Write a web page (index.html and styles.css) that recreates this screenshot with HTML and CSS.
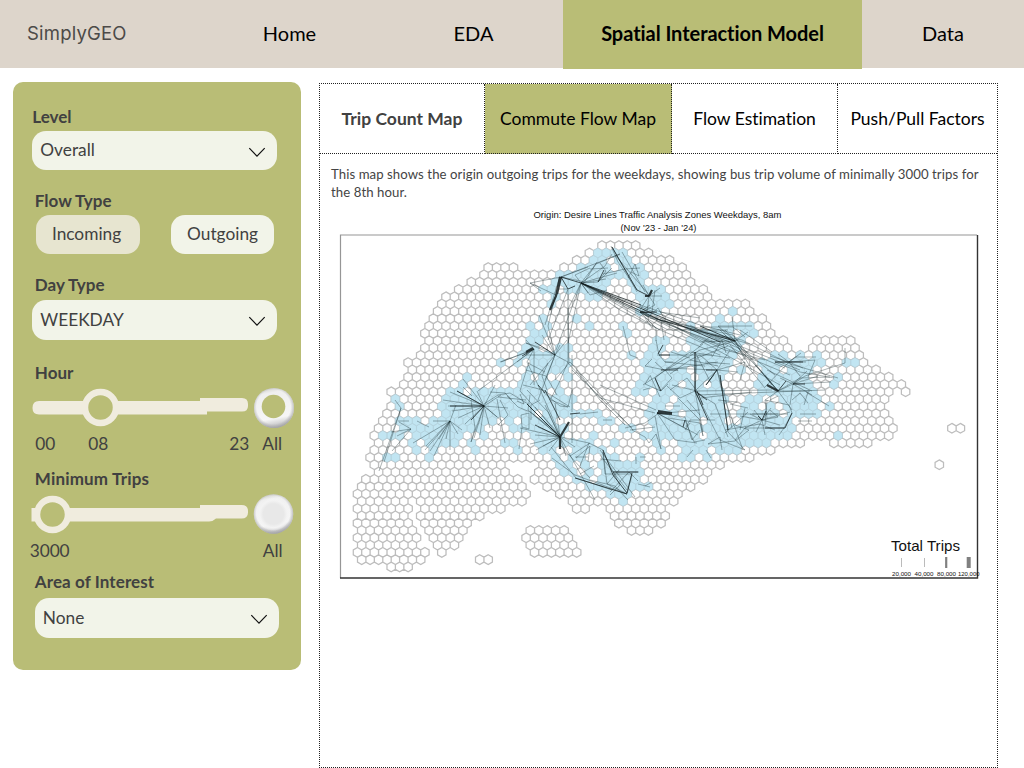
FILE: index.html
```html
<!DOCTYPE html>
<html lang="en">
<head>
<meta charset="utf-8">
<title>SimplyGEO</title>
<link rel="stylesheet" href="styles.css">
</head>
<body>
<nav class="nav">
  <span class="brand">SimplyGEO</span>
  <a class="nav-item home">Home</a>
  <a class="nav-item eda">EDA</a>
  <a class="nav-item active">Spatial Interaction Model</a>
  <a class="nav-item data">Data</a>
</nav>
<main class="page">
  <aside class="filters">
    <section class="field level">
      <h2>Level</h2>
      <div class="select"><span>Overall</span><svg width="18" height="11" viewBox="0 0 18 11"><path d="M1.3 1.2L9 9.2L16.7 1.2"/></svg></div>
    </section>
    <section class="field flow">
      <h2 class="inset">Flow Type</h2>
      <div class="buttons"><span class="btn off">Incoming</span><span class="btn">Outgoing</span></div>
    </section>
    <section class="field day">
      <h2 class="inset">Day Type</h2>
      <div class="select"><span>WEEKDAY</span><svg width="18" height="11" viewBox="0 0 18 11"><path d="M1.3 1.2L9 9.2L16.7 1.2"/></svg></div>
    </section>
    <section class="field hour">
      <h2 class="inset">Hour</h2>
      <svg class="slider" width="268" height="44" viewBox="0 0 268 44">
        <defs>
          <linearGradient id="knob" x1=".4" y1="0" x2=".6" y2="1"><stop offset="0" stop-color="#d6d6d2"/><stop offset=".12" stop-color="#efefef"/><stop offset=".75" stop-color="#f6f6f6"/><stop offset="1" stop-color="#b4b4b6"/></linearGradient>
          <radialGradient id="face"><stop offset=".6" stop-color="#e8e8e8"/><stop offset=".8" stop-color="#f3f3f3"/><stop offset="1" stop-color="#f5f5f5" stop-opacity="0"/></radialGradient>
          <radialGradient id="edge" cx=".49" cy=".47" r=".53"><stop offset=".8" stop-color="#aaa" stop-opacity="0"/><stop offset="1" stop-color="#9c9ca0" stop-opacity=".75"/></radialGradient>
        </defs>
        <path class="track" d="M7 16H168V13H210Q216 13 216 19V21Q216 26.500 210 26.500H175V29.500H7Q.5 29.500 .5 23Q.5 16 7 16Z"/>
        <circle class="thumb" cx="68.500" cy="22.500" r="15.500"/>
        <circle cx="242" cy="23" r="20" fill="url(#knob)"/>
        <circle cx="242" cy="23" r="20" fill="url(#edge)"/>
        <circle cx="241.500" cy="21.500" r="11.800" fill="#b9bd76"/>
      </svg>
      <div class="ticks"><span class="t0">00</span><span class="t8">08</span><span class="t23">23</span><span class="all">All</span></div>
    </section>
    <section class="field trips">
      <h2 class="inset">Minimum Trips</h2>
      <svg class="slider" width="268" height="44" viewBox="0 0 268 44">
        <path class="track" d="M-.5 16H168V13H209.500Q216 13 216 19V20.500Q216 26.500 209.500 26.500H184Q181 29.500 177 29.500H-.5Z"/>
        <circle class="thumb" cx="20.500" cy="22.500" r="15.500"/>
        <circle cx="241.500" cy="22" r="19.700" fill="url(#knob)"/>
        <circle cx="241.500" cy="22" r="19.700" fill="url(#edge)"/>
        <circle cx="241.500" cy="22" r="17" fill="url(#face)"/>
      </svg>
      <div class="ticks"><span class="min">3000</span><span class="all">All</span></div>
    </section>
    <section class="field area">
      <h2 class="inset">Area of Interest</h2>
      <div class="select"><span>None</span><svg width="18" height="11" viewBox="0 0 18 11"><path d="M1.3 1.2L9 9.2L16.700 1.2"/></svg></div>
    </section>
  </aside>
  <section class="content">
    <div class="tabs">
      <a class="tab first">Trip Count Map</a>
      <a class="tab current">Commute Flow Map</a>
      <a class="tab">Flow Estimation</a>
      <a class="tab last">Push/Pull Factors</a>
    </div>
    <p class="desc">This map shows the origin outgoing trips for the weekdays, showing bus trip volume of minimally 3000 trips for the 8th hour.</p>
    <svg class="map" width="650" height="375" viewBox="335 205 650 375">
      <g class="map-title"><text x="657.500" y="218" textLength="248" lengthAdjust="spacingAndGlyphs">Origin: Desire Lines Traffic Analysis Zones Weekdays, 8am</text><text x="658.500" y="231" textLength="76" lengthAdjust="spacingAndGlyphs">(Nov '23 - Jan '24)</text></g>
      <g id="cells"></g>
      <path class="thin" d="M395 400L401 408L384 462M401 408L379 471M399 422L411 429L397 436M411 429L392 451M391 432L411 429M417 421L429 427M398 421H409M413 443L450 421M426 446L450 421M430 451L450 421M434 456L450 421M439 439L450 421M450 421L446 439M450 421V450M450 421L458 434M450 421L433 421M450 421L425 450M450 421L462 430M450 421L456 405"/>
      <path class="thin" d="M450 392L484 406M443 400L484 406M448 406L484 406M452 411L484 406M458 418L484 406M465 424L484 406M471 442L484 406M474 438L484 406M484 406L480 435M484 406L490 428M484 406L497 417M484 406L502 421M484 406L508 408M484 406L501 395M484 406L477 391M484 406L463 379M484 406L457 391M484 406L495 385M463 387L472 396M471 400L475 428L471 442M497 399L500 416L505 443M500 400L508 415L498 425M490 392L505 393L512 400M484 404L498 395L510 393L528 404M498 397L526 400M507 396L518 407L530 412M520 394L524 404L517 401M521 415L529 413V429L522 427ZM522 427L519 449M540 400L531 405V420M527 390L548 412L560 437M530 412L560 437"/>
      <path class="thin" d="M478 391L534 349M501 362L534 349M500 362L528 352M517 362L534 349M534 349L527 362L538 385M534 349V385M526 340L534 349M555 355L526 343L548 350M555 355L539 315M555 355L542 335M555 355L548 326M555 355L560 345M555 355L567 340M555 355H526M555 355L568 362M555 355L545 380M555 355L530 385M555 355L538 400M570 362L555 380M568 362L558 385L550 400M538 385L560 435M523 385L543 390L570 407M529 362L520 391L560 435M530 395L528 410L560 435M543 392L560 406L568 407L551 400M548 363L542 376L547 390M545 372L528 363M526 370L546 376L557 395"/>
      <path class="thin" d="M560 437L533 414M560 437L527 404M560 437L535 407M560 437L545 405M560 437L555 403M560 437L520 428M560 437L538 427M560 437L535 435M560 437L543 446M560 437L549 451M560 437L575 447M560 437L566 456M560 437L595 500M560 437L530 444M560 437L536 450M561 437L589 443L603 450M572 413V443M572 355V412M572 390L568 407M580 414L598 412M603 420H612M551 447L576 478L612 490M552 458L575 475M575 475L627 494M576 458L590 446L588 462M570 456L590 443M575 457H588M589 443L580 466M600 450L635 497M603 452L607 484L627 494L632 474L605 474L603 450M603 452L613 472L639 472M610 492L629 472L638 481M607 484L619 470M613 472L620 485L610 495M580 474L594 466M600 459L621 461M636 457V464M640 457H646M645 486L652 482M638 484L650 487M590 480L615 486L628 500M600 455L627 490M560 445L590 478"/>
      <path class="thin" d="M561 277L530 283L541 291M561 277L620 254M561 277L588 267M581 283L605 266L612 254M581 283L596 264L620 254M581 283L598 282L612 268M598 282L606 271L600 263M581 283L590 295L607 290M581 283L588 293M581 283L606 279M581 283L617 273M581 283L575 275L590 268M581 283L568 309L569 363M568 290V363M581 283L568 343M581 283L556 350M568 289L548 340M560 276L545 325M555 297L548 326M568 289H558M561 277L585 282M530 283L556 295M612 247L637 292M615 255L650 296M611 246L618 262L637 290M622 252L645 292M631 272L639 276L635 264L628 278M603 274L625 269M625 269L640 268M597 262L585 281M590 269L608 268"/>
      <path class="thin" d="M649 296L662 296M649 296L655 305L642 312M649 296L643 285M649 296L660 288M649 296L640 310M649 296L647 312M655 290L652 312M641 312L648 317L658 308L664 318M640 312L656 328V341M640 312L661 320L664 340M645 318L652 328M640 312L650 305M581 283L650 318L715 342M581 283L668 330L728 330M581 283L700 342L735 341M581 283L660 330L720 355M640 305L700 325L740 335M645 315L730 342M650 315L717 335L750 344M655 318L725 350L765 360M660 312L700 318M581 283L800 370M660 318L780 385M640 312L790 375M715 338L785 368M735 341L778 391M650 318L733 335L772 385M720 330L760 370L778 391M690 325L745 355M725 335L775 375M730 345L765 388M690 330L742 340L790 364L838 378M735 341L752 370M740 330L772 352M581 283L620 310L660 330M623 326L630 355L638 358"/>
      <path class="thin" d="M657 355H712M666 368L717 370M659 355L665 362L673 362M665 370L645 366L652 359M656 340L659 355M665 370L672 378L660 391L655 378L665 370M665 370L690 352L730 358M666 370L643 385M666 370L700 350L736 341M666 370L718 362M664 370L655 362M695 352V391M695 352L711 383M695 391L697 358L728 346M717 370L730 350M717 370L706 385L714 375M717 370L738 372M717 370L700 355L690 360M717 370L722 391M717 370L745 362L740 380M717 370L695 391M717 370L726 400L732 428M735 341L732 317M735 341L718 326L752 326M735 341L748 332M735 341L725 330M735 341L745 360M733 327L745 337M700 327L733 327M712 357L722 340L726 353M700 345L712 335L735 341M704 340L724 345M690 354L703 344M705 362L730 364M661 391L645 384L650 376M650 388L643 390M650 375L660 397M661 391L668 384M665 362L705 366M670 374L690 360L718 366M671 352L690 358"/>
      <path class="thin" d="M670 390L687 378L697 391M672 385L697 391M695 391L680 398L667 386M695 391L720 440L745 450M695 391L715 404L728 437M695 391L703 432M697 391L772 390M697 395L825 390M701 398L752 392M678 398L700 420L703 436M687 400L700 415M720 375L728 432L745 450M725 400L743 450M735 425L749 430L735 441L708 444L720 437L722 450M745 408L740 430M725 430L760 424L775 430M748 412L725 433M718 400L737 402M730 404L748 408M710 414H778M665 413L700 410M657 413L675 440L697 443M657 413L685 417L692 440L700 430M657 413L698 435M657 413L688 430M655 416L661 449L656 434L649 443L645 437L632 430M665 406H680M659 413L645 423L625 428M668 418L700 423L703 436M690 423L685 430M630 430L655 427M570 362L633 430M572 370L632 428M568 363L600 398L655 413M577 370L600 400L625 425M600 385L656 410M685 420L694 442L705 440M693 450L687 457M706 450L711 458M715 420H690L686 427"/>
      <path class="thin" d="M775 362L800 372L834 378M775 362H806M789 362L765 387M789 362L795 357L816 357M789 362L801 353M789 362L778 354M789 362L803 368M789 362L800 376M789 362L815 360L808 377M789 362L770 356M778 391L793 384L831 382M778 391L765 400L767 418M778 391L792 410M793 384L812 395M793 384L805 376L845 363V348M793 384L790 405M793 384L807 371M767 370L812 391M778 391H810M778 391L800 378L830 377M765 375L778 391M755 365L778 391M793 384L818 376M793 384L780 378M806 392L829 406M808 392L804 405M792 400L800 393L808 403M800 414H816M798 421H812M762 420L778 417L770 410M762 420L750 414M762 420L745 428H784L792 413M762 420L771 408M762 420L754 410M762 420L790 412M762 420L780 425M762 420L756 432M762 420L765 435M762 420L740 416M767 400L765 425M765 400L789 405L792 413M745 428L735 440M770 400L778 396M752 414L788 414M784 428L779 435"/>
      <path class="mid" d="M450 406H484M484 406L457 391M484 406L471 420M560 437L527 404M560 437L535 425M534 349L522 356M555 355L535 342M545 390L560 420M538 385L545 393M581 283L561 277L568 289L575 286M581 283L720 342M581 283L641 305M612 247L637 290L649 296M640 312H657M640 312L652 313M581 283L660 320L735 341M658 354L663 345M659 355H670M661 370H678M717 370H706M717 370L706 385M695 391L707 400M661 391L655 378M697 391L703 405M789 362L775 362M789 362L803 362M778 391L786 381M793 384L805 384M762 420L766 411M792 413L785 428H765M762 420L758 416M603 450L613 475L627 493L632 473M613 472H638M575 478L627 494M598 282L604 270M570 414L580 413M695 352V391L708 420M685 420L683 427M735 341L700 326M720 375L728 430"/>
      <path class="thick" d="M560 277L556 296L550 310M561 277L557 294M533 348L526 352M560 437L569 422M560 437V449M649 296L652 290M649 296H645M778 391L767 385M657 413L672 414M672 413L658 411"/>
      <g class="frame"><path class="f1" d="M340.500 578V235H977"/><path class="f2" d="M340 578H977.500V235"/></g>
      <text class="legend" x="891" y="551" textLength="69" lengthAdjust="spacingAndGlyphs">Total Trips</text>
      <path d="M901.500 558V567M924.500 558V567" stroke="#bbb" stroke-width="1"/><path d="M946.200 557V568" stroke="#808080" stroke-width="2.200"/><path d="M968.700 557V568" stroke="#808080" stroke-width="4"/>
      <g class="nums"><text x="892" y="575.500" textLength="19" lengthAdjust="spacingAndGlyphs">20,000</text><text x="914.500" y="575.500" textLength="19" lengthAdjust="spacingAndGlyphs">40,000</text><text x="937" y="575.500" textLength="19" lengthAdjust="spacingAndGlyphs">80,000</text><text x="958" y="575.500" textLength="21.500" lengthAdjust="spacingAndGlyphs">120,000</text></g>
    </svg>
  </section>
</main>
<script src="map.js"></script>
</body>
</html>
```
FILE: map.js
```js
// Hexagon rows: each pair is the first and last cell centre of a run.
var rows = [
[602,636],[589,648],[577,669],[489,514,564,682],[484,686],[471,690],[458,703],[446,707],[442,745],[438,749],
[434,762],[429,766],[425,771],[429,783,817,851],[425,787,813,855],[421,859],[408,863],[412,876],[408,889],[404,901],
[391,889,905,905],[395,884],[391,884],[387,888],[383,889],[379,893,951,960],[374,889],[379,800,833,867],[374,771],[370,750],
[374,416,425,501,547,720,939,939],[378,412,429,505,539,711],[366,416,425,518,535,703],[362,412,421,522,547,690],[357,526,560,678],[362,404,421,518,572,673],[357,408,425,501,577,585,610,661],[362,404,421,480,615,665],[357,408,425,467,619,661],[362,412,429,463,531,564,631,648],
[357,416,433,459,526,568],[362,412,438,454,531,573],[357,425,442,442,535,577],[362,421,480,488],[391,408]];
var served = {
1:[598,623],2:[594,602,619,627],3:[581,606,623,640],4:[560,610,619,640],5:[556,606,631,640],6:[543,551,568,585,594,602,636,661],
7:[556,556,589,598,636,665],8:[552,552,644,669],9:[640,657,732,732],10:[543,543,577,577,720,720],11:[530,530,547,547,589,589,623,623,690,690,720,753],
12:[534,543,627,627,695,728,745,753],13:[530,538,657,665,690,741],14:[526,535,560,568,652,660,695,737],15:[522,568,631,631,648,655,674,733,775,783,800,800,817,817],
16:[501,501,518,518,534,551,560,568,644,728,762,779,787,812,821,821,846,846,855,855],17:[530,547,556,563,648,683,699,724,741,741,766,775,791,808],
18:[467,467,526,526,543,543,568,568,640,683,705,722,765,803,838,838],19:[463,463,522,535,547,552,640,674,687,695,712,720,762,808,833,833],
20:[450,458,475,483,492,518,526,547,560,560,636,644,661,678,686,720,762,813],21:[395,395,447,458,465,483,491,520,530,538,547,572,657,665,682,724,749,758,783,816],
22:[400,400,442,475,484,510,518,543,552,568,652,661,678,720,745,753,770,770,787,812,829,829],23:[450,492,500,533,543,552,568,600,648,674,690,727,741,775,792,800,808,817],
24:[400,417,433,442,450,484,492,492,509,509,526,535,543,552,602,610,652,697,711,720,745,753,762,787],25:[404,412,420,429,438,455,462,480,517,526,534,552,560,560,623,631,657,700,711,741,750,792],
26:[383,383,391,400,417,434,442,459,484,484,535,560,593,593,644,661,669,695,711,728,737,787,838,838],27:[412,412,429,454,471,471,505,505,517,517,535,560,573,590,614,614,657,657,682,708,716,733,741,767],
28:[417,417,433,433,475,475,518,518,543,552,577,585,594,602,661,661,690,703,720,737],29:[387,395,429,429,556,556,573,581,606,614,640,640,682,690,707,707],
30:[556,566,585,585,602,636],31:[565,573,590,590,606,640],32:[577,585,602,636],33:[590,631,640,648],34:[610,627],35:[623,623]};
var W = 8.432, H = 7.302, X = 391.2, Y = 245.7;
function runs(list, row, fn) {
  var shift = X + (row % 2 ? W / 2 : 0);
  for (var j = 0; list && j < list.length; j += 2) {
    var a = Math.round((list[j] - shift) / W), b = Math.round((list[j + 1] - shift) / W);
    for (var c = a; c <= b; c++) fn(shift + c * W, Y + row * H);
  }
}
function hex(x, y) {
  return 'M' + x.toFixed(1) + ' ' + (y - 4.87).toFixed(1) + 'l4.216 2.434v4.868l-4.216 2.434l-4.216 -2.434v-4.868z';
}
var outline = '', fill = '';
rows.forEach(function (r, i) {
  runs(r, i, function (x, y) { outline += hex(x, y); });
  runs(served[i], i, function (x, y) { fill += hex(x, y); });
});
document.getElementById('cells').innerHTML =
  '<path class="cell" d="' + outline + '"/><path class="served" d="' + fill + '"/>';
```
FILE: styles.css
```css
* { box-sizing: border-box; }
body { margin: 0; width: 1024px; height: 768px; overflow: hidden; background: #fff; font-family: Lato, "Liberation Sans", sans-serif; font-variant-ligatures: none; color: #414141; }
.nav { display: grid; grid-template-columns: 196px 187px 180px 299px 162px; height: 68px; background: #ddd5cb; }
.brand { padding-left: 27px; font: 18.500px/67px Inter, sans-serif; color: #4c4a48; letter-spacing: .2px; }
.nav-item { display: block; height: 69px; line-height: 66px; text-align: center; font-size: 20px; color: #000; }
.eda { padding-left: 1px; }
.active { background: #b9bd76; font-weight: 700; letter-spacing: -.05px; }
.page { display: flex; padding: 14px 0 0 13px; }
.filters { width: 287.500px; height: 588px; padding: 25px 0 0 19.300px; border-radius: 10px; background: #b9bd76; display: flex; flex-direction: column; }
.field { width: 268px; }
.field h2 { margin: 0; font-size: 17px; line-height: 20px; font-weight: 700; }
.field .inset { padding-left: 2.500px; }
.level { height: 84px; }
.flow { height: 84px; }
.day { height: 88px; }
.hour { height: 106px; }
.trips { height: 103px; }
.trips h2 { letter-spacing: .18px; }
.area h2 { letter-spacing: .1px; }
.select { display: flex; align-items: center; justify-content: space-between; width: 244.500px; height: 39.500px; margin-top: 3.500px; padding: 0 11px 1px 8px; border-radius: 14px; background: #f2f4e9; font-size: 17.300px; }
.select svg { fill: none; stroke: #111; stroke-width: 1.2; margin-top: 5px; }
.day .select { margin-top: 5px; }
.area .select { margin: 6px 0 0 2.500px; }
.buttons { display: flex; gap: 31px; margin: 4px 0 0 4px; }
.btn { width: 103.500px; height: 39px; line-height: 38px; text-align: center; border-radius: 14px; background: #f2f4e9; font-size: 17.300px; }
.off { background: #e7e5d0; padding-right: 3px; }
.slider { display: block; margin-top: 2px; overflow: visible; }
.track { fill: #f0ecde; }
.thumb { fill: #b9bd76; stroke: #f0ecde; stroke-width: 6.500; }
.ticks { display: flex; font-size: 17.300px; line-height: 20px; margin-top: 5px; }
.trips .slider { margin-top: 3px; }
.t0 { width: 54px; padding-left: 3px; }
.t8 { width: 143px; padding-left: 2px; }
.t23 { width: 33px; }
.min { width: 233px; margin-left: -2.500px; letter-spacing: -.1px; }
.content { width: 679px; height: 685px; margin: 1px 0 0 18.500px; border: 1px dotted #222; }
.tabs { display: grid; grid-template-columns: 165px 187px 166px 159px; height: 70px; }
.tab { height: 70px; line-height: 70px; text-align: center; font-size: 17.500px; color: #000; border-bottom: 1px dotted #222; border-right: 1px dotted #222; }
.first { font-weight: 700; color: #414141; }
.current { background: #b9bd76; }
.last { border-right: 0; }
.desc { margin: 11px 0 0; padding-left: 11px; font-size: 13.200px; letter-spacing: .07px; line-height: 18px; height: 40px; color: #444; }
.map { display: block; margin-left: 15px; }
.map text { font-family: "Liberation Sans", Arial, sans-serif; fill: #111; }
.map-title text { text-anchor: middle; font-size: 9.800px; }
.map .legend { font-size: 14.500px; }
.nums text { font-size: 6.200px; }
.cell { fill: #fff; stroke: #bdbdbd; stroke-width: 1.25; }
.served { fill: #c1e5f2; stroke: #b4d3de; stroke-width: .7; }
.thin { fill: none; stroke: #14272b; stroke-width: .55; opacity: .65; }
.mid { fill: none; stroke: #10191b; stroke-width: 1; opacity: .75; }
.thick { fill: none; stroke: #151d1f; stroke-width: 2.200; opacity: .85; }
.frame path { fill: none; }
.f1 { stroke: #969696; stroke-width: 1.200; }
.f2 { stroke: #333; stroke-width: 1.400; }
```
